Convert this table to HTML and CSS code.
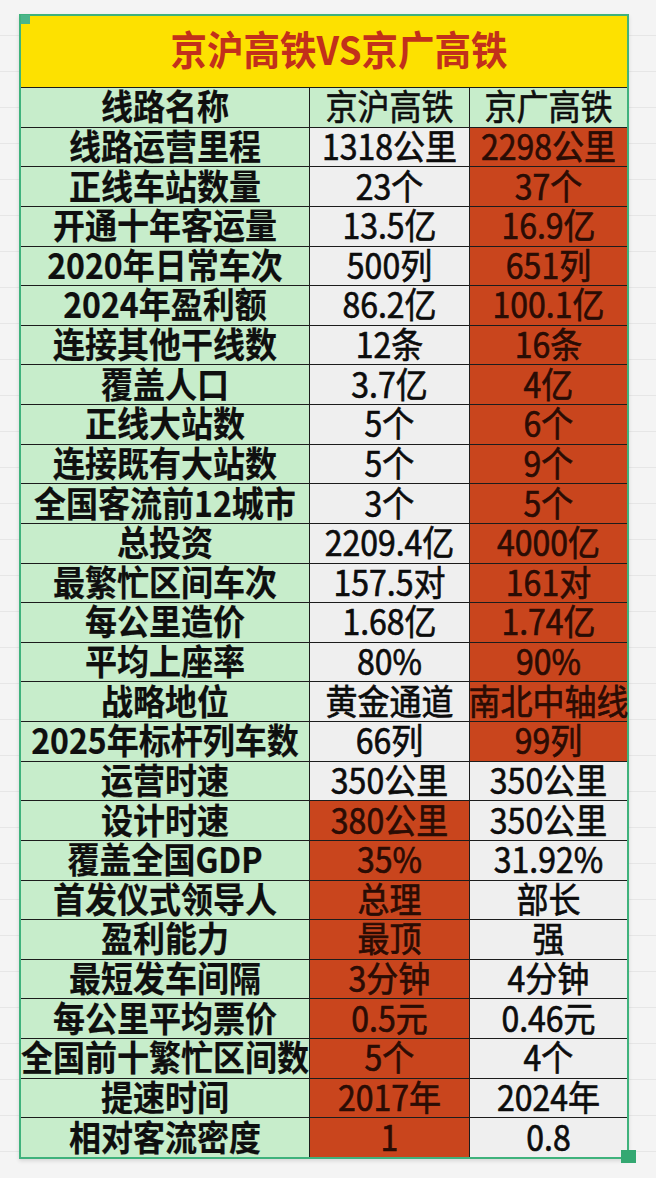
FILE: index.html
```html
<!DOCTYPE html>
<html lang="zh-CN">
<head>
<meta charset="utf-8">
<title>京沪高铁VS京广高铁</title>
<link rel="stylesheet" href="styles.css">
</head>
<body>
<div class="page">
  <div class="sheet">
    <div class="title"><span class="t">京沪高铁VS京广高铁</span></div>
    <div class="grid">
      <div class="c name"><span>线路名称</span></div><div class="c hd"><span>京沪高铁</span></div><div class="c hd"><span>京广高铁</span></div>
      <div class="c name"><span>线路运营里程</span></div><div class="c g"><span>1318公里</span></div><div class="c r"><span>2298公里</span></div>
      <div class="c name"><span>正线车站数量</span></div><div class="c g"><span>23个</span></div><div class="c r"><span>37个</span></div>
      <div class="c name"><span>开通十年客运量</span></div><div class="c g"><span>13.5亿</span></div><div class="c r"><span>16.9亿</span></div>
      <div class="c name"><span>2020年日常车次</span></div><div class="c g"><span>500列</span></div><div class="c r"><span>651列</span></div>
      <div class="c name"><span>2024年盈利额</span></div><div class="c g"><span>86.2亿</span></div><div class="c r"><span>100.1亿</span></div>
      <div class="c name"><span>连接其他干线数</span></div><div class="c g"><span>12条</span></div><div class="c r"><span>16条</span></div>
      <div class="c name"><span>覆盖人口</span></div><div class="c g"><span>3.7亿</span></div><div class="c r"><span>4亿</span></div>
      <div class="c name"><span>正线大站数</span></div><div class="c g"><span>5个</span></div><div class="c r"><span>6个</span></div>
      <div class="c name"><span>连接既有大站数</span></div><div class="c g"><span>5个</span></div><div class="c r"><span>9个</span></div>
      <div class="c name"><span>全国客流前12城市</span></div><div class="c g"><span>3个</span></div><div class="c r"><span>5个</span></div>
      <div class="c name"><span>总投资</span></div><div class="c g"><span>2209.4亿</span></div><div class="c r"><span>4000亿</span></div>
      <div class="c name"><span>最繁忙区间车次</span></div><div class="c g"><span>157.5对</span></div><div class="c r"><span>161对</span></div>
      <div class="c name"><span>每公里造价</span></div><div class="c g"><span>1.68亿</span></div><div class="c r"><span>1.74亿</span></div>
      <div class="c name"><span>平均上座率</span></div><div class="c g"><span>80%</span></div><div class="c r"><span>90%</span></div>
      <div class="c name"><span>战略地位</span></div><div class="c g"><span>黄金通道</span></div><div class="c r"><span>南北中轴线</span></div>
      <div class="c name"><span>2025年标杆列车数</span></div><div class="c g"><span>66列</span></div><div class="c r"><span>99列</span></div>
      <div class="c name"><span>运营时速</span></div><div class="c g"><span>350公里</span></div><div class="c g"><span>350公里</span></div>
      <div class="c name"><span>设计时速</span></div><div class="c r"><span>380公里</span></div><div class="c g"><span>350公里</span></div>
      <div class="c name"><span>覆盖全国GDP</span></div><div class="c r"><span>35%</span></div><div class="c g"><span>31.92%</span></div>
      <div class="c name"><span>首发仪式领导人</span></div><div class="c r"><span>总理</span></div><div class="c g"><span>部长</span></div>
      <div class="c name"><span>盈利能力</span></div><div class="c r"><span>最顶</span></div><div class="c g"><span>强</span></div>
      <div class="c name"><span>最短发车间隔</span></div><div class="c r"><span>3分钟</span></div><div class="c g"><span>4分钟</span></div>
      <div class="c name"><span>每公里平均票价</span></div><div class="c r"><span>0.5元</span></div><div class="c g"><span>0.46元</span></div>
      <div class="c name"><span>全国前十繁忙区间数</span></div><div class="c r"><span>5个</span></div><div class="c g"><span>4个</span></div>
      <div class="c name"><span>提速时间</span></div><div class="c r"><span>2017年</span></div><div class="c g"><span>2024年</span></div>
      <div class="c name"><span>相对客流密度</span></div><div class="c r"><span>1</span></div><div class="c g"><span>0.8</span></div>
    </div>
    <span class="handle handle-tl"></span>
    <span class="handle handle-br"></span>
  </div>
</div>
</body>
</html>
```

FILE: styles.css
```css
* { box-sizing: border-box; }

html, body {
  margin: 0;
  padding: 0;
}

body {
  width: 656px;
  height: 1178px;
  overflow: hidden;
  background-color: #f4f4f4;
  background-image: repeating-linear-gradient(to bottom, transparent 0, transparent 35px, #e6e6e6 35px, #e6e6e6 36px);
  font-family: "Noto Sans CJK SC", "Noto Sans", sans-serif;
  color: #111;
}

.page {
  padding: 14px 0 0 19px;
}

.sheet {
  position: relative;
  width: 610px;
  border: 2px solid #3fb27c;
  background: #fde100;
  box-shadow: 0 2px 4px rgba(0, 0, 0, 0.12);
}

.title {
  height: 71px;
  display: flex;
  align-items: center;
  justify-content: center;
  padding-left: 30px;
  background: #fde100;
  color: #c2301b;
  font-size: 36.5px;
  font-weight: 700;
  white-space: nowrap;
}

.t {
  display: inline-block;
  line-height: 1;
  transform: translateY(-2px) scaleY(1.08);
}

.grid {
  display: grid;
  grid-template-columns: 288px 159px 157px;
  grid-auto-rows: 38.63px;
  gap: 1px;
  padding-top: 1px;
  background: #1c1c1c;
}

.c {
  display: flex;
  align-items: center;
  justify-content: center;
  white-space: nowrap;
  font-size: 32px;
  font-weight: 400;
  -webkit-text-stroke: 0.6px currentColor;
}

.c span {
  display: inline-block;
  line-height: 1;
  transform: translateY(-2px) scaleY(1.1);
}

.name {
  background: #c7edcb;
  font-weight: 700;
  -webkit-text-stroke: 0.2px currentColor;
  color: #0f0f0f;
}

.hd {
  background: #c7edcb;
  color: #0f0f0f;
}

.g {
  background: #efefef;
  color: #0c0c0c;
}

.r {
  background: #c9451d;
  color: #2a0c04;
}

.handle {
  position: absolute;
  background: #34a872;
}

.handle-tl {
  top: -1px;
  left: 0;
  width: 9px;
  height: 9px;
  background: #4bb58a;
}

.handle-br {
  right: -9px;
  bottom: -6px;
  width: 15px;
  height: 13px;
}
```
